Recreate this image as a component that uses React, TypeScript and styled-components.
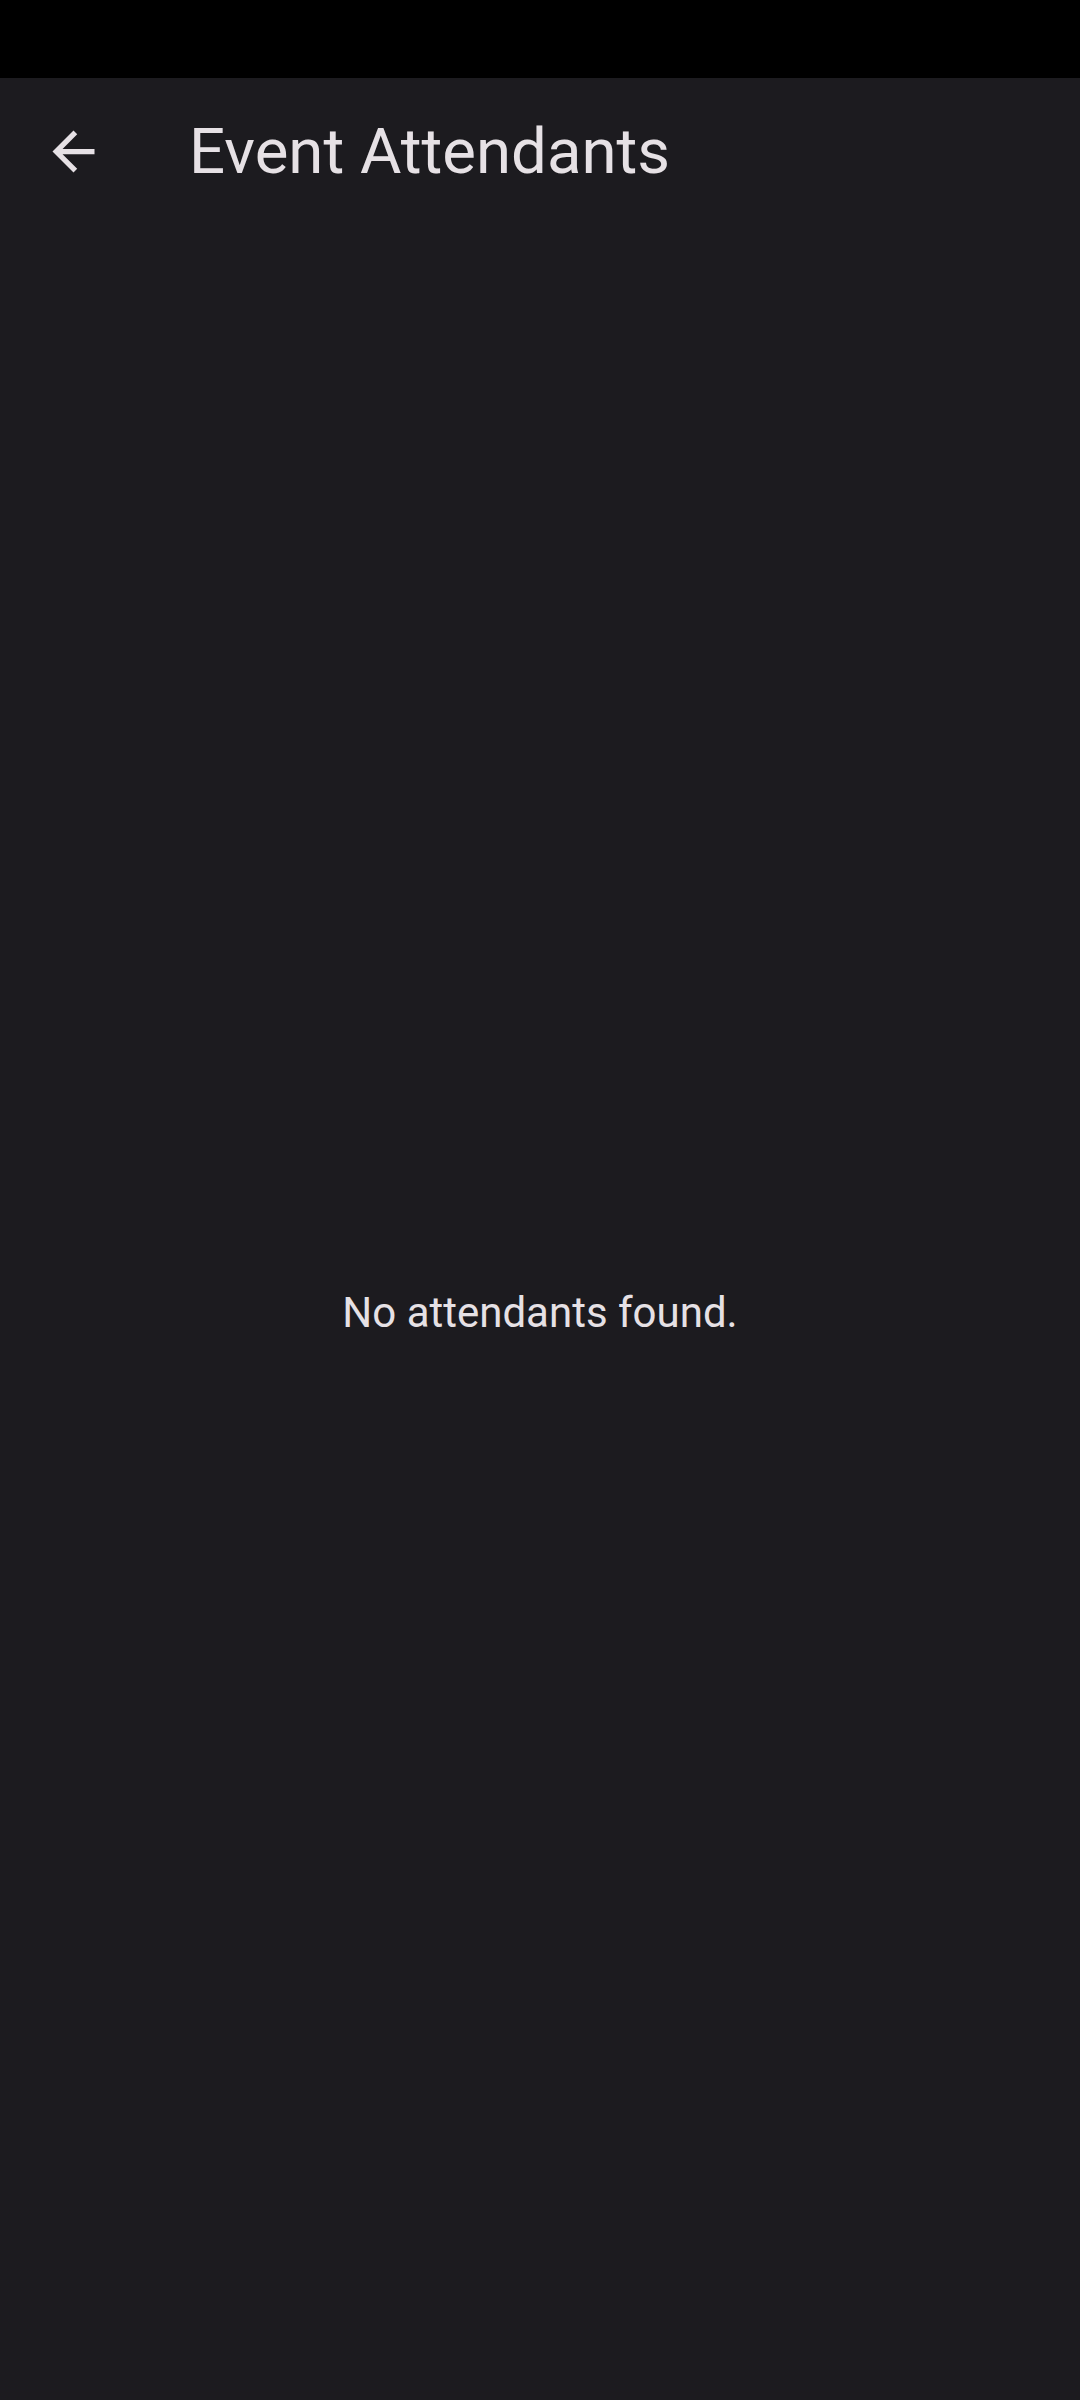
import styled, { createGlobalStyle } from "styled-components";

const GlobalStyle = createGlobalStyle`
  html, body {
    margin: 0;
    padding: 0;
    background: #1c1b1f;
  }
  body {
    font-family: Roboto, "Noto Sans", sans-serif;
  }
`;

const Screen = styled.div`
  width: 1080px;
  height: 2400px;
  display: flex;
  flex-direction: column;
  background: #1c1b1f;
  color: #e6e1e5;
`;

const StatusBar = styled.div`
  height: 78px;
  flex-shrink: 0;
  background: #000;
`;

const AppBar = styled.header`
  height: 147px;
  flex-shrink: 0;
  display: flex;
  align-items: center;
  padding: 0 0 0 42px;
`;

const BackButton = styled.button`
  width: 63px;
  height: 63px;
  padding: 0;
  border: 0;
  background: none;
  color: #e6e1e5;
  display: flex;
  align-items: center;
  justify-content: center;
`;

const Title = styled.h1`
  margin: 0 0 0 84px;
  font-size: 63.5px;
  font-weight: 400;
  line-height: 1;
  letter-spacing: 0;
`;

const Body = styled.main`
  flex: 1;
  display: flex;
  align-items: center;
  justify-content: center;
`;

const Empty = styled.p`
  margin: 0;
  font-size: 42px;
  line-height: 1;
  letter-spacing: 0;
`;

const ArrowBack = () => (
  <svg width="63" height="63" viewBox="0 0 24 24" fill="currentColor">
    <path d="M20 11H7.83l5.59-5.59L12 4l-8 8 8 8 1.41-1.41L7.83 13H20v-2z" />
  </svg>
);

export default function App() {
  return (
    <Screen>
      <GlobalStyle />
      <StatusBar />
      <AppBar>
        <BackButton aria-label="Back">
          <ArrowBack />
        </BackButton>
        <Title>Event Attendants</Title>
      </AppBar>
      <Body>
        <Empty>No attendants found.</Empty>
      </Body>
    </Screen>
  );
}
